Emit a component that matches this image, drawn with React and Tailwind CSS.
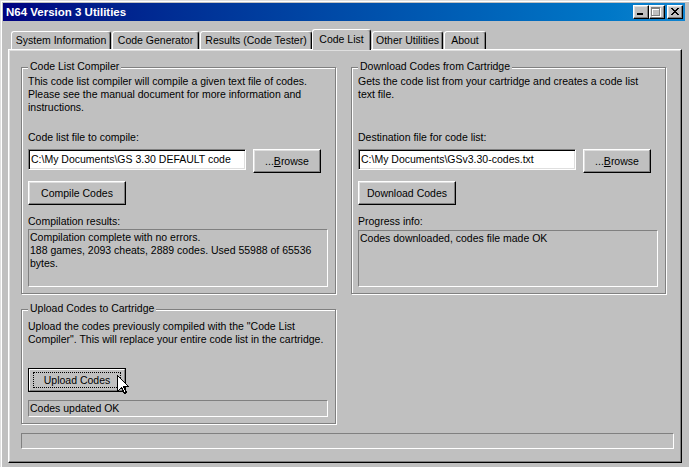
import React from 'react';

const raised =
  'border border-t-white border-l-white border-r-black border-b-black shadow-[inset_-1px_-1px_0_#808080,inset_1px_1px_0_#dfdfdf]';

function Button({ className = '', children }) {
  return (
    <div className={`flex items-center justify-center bg-[#c0c0c0] ${raised} ${className}`}>
      {children}
    </div>
  );
}

function Edit({ value, className = '' }) {
  return (
    <div
      className={`flex h-[21px] w-[218px] items-center overflow-hidden whitespace-nowrap border border-t-[#808080] border-l-[#808080] border-r-white border-b-white bg-white pl-[2px] shadow-[inset_1px_1px_0_#000,inset_-1px_-1px_0_#dfdfdf] ${className}`}
    >
      {value}
    </div>
  );
}

function StaticBox({ className = '', children }) {
  return (
    <div
      className={`w-[300px] overflow-hidden border border-t-[#808080] border-l-[#808080] border-r-white border-b-white pl-[1px] ${className}`}
    >
      {children}
    </div>
  );
}

function Group({ title, className = '', children }) {
  return (
    <div
      className={`flex w-[315px] flex-col items-start border border-[#808080] px-[6px] shadow-[1px_1px_0_#fff,inset_1px_1px_0_#fff] ${className}`}
    >
      <span className="-mt-[8px] bg-[#c0c0c0] px-[2px]">{title}</span>
      {children}
    </div>
  );
}

function Tab({ label, width, gap, selected }) {
  return (
    <div
      style={{ width, marginLeft: gap }}
      className={`flex items-center justify-center rounded-t-[3px] border-t border-l border-r border-t-white border-l-white border-r-black bg-[#c0c0c0] shadow-[inset_-1px_0_0_#808080] ${
        selected ? 'relative z-10 -mb-px h-[21px] pb-[1px]' : 'h-[18px]'
      }`}
    >
      {label}
    </div>
  );
}

function TitleButton({ className = '', children }) {
  return (
    <div className={`h-[14px] w-[16px] bg-[#c0c0c0] ${raised} ${className}`}>
      <svg width="14" height="12" viewBox="0 0 14 12" shapeRendering="crispEdges">
        {children}
      </svg>
    </div>
  );
}

function Cursor() {
  return (
    <svg
      className="absolute left-[88px] top-[6px]"
      width="13"
      height="20"
      viewBox="0 0 13 20"
      shapeRendering="crispEdges"
    >
      <path
        d="M0.5 0.5 L0.5 16.5 L4.5 12.5 L7.5 18.5 L9.5 17.5 L6.5 11.5 L11.5 11.5 Z"
        fill="#fff"
        stroke="#000"
        strokeWidth="1"
      />
    </svg>
  );
}

const tabs = [
  { label: 'System Information', width: 100, gap: 0 },
  { label: 'Code Generator', width: 87, gap: 1 },
  { label: 'Results (Code Tester)', width: 112, gap: 1 },
  { label: 'Code List', width: 59, gap: 0, selected: true },
  { label: 'Other Utilities', width: 71, gap: 1 },
  { label: 'About', width: 42, gap: 1 },
];

export default function App() {
  return (
    <div className="h-[467px] w-[689px] overflow-hidden bg-[#c0c0c0] font-['Liberation_Sans',Arial,sans-serif] text-[10.5px] leading-[13px] text-black">
      <div className="flex h-[474px] w-[692px] flex-col border-t border-l border-[#dfdfdf] p-[2px] shadow-[inset_1px_1px_0_#fff]">
        {/* title bar */}
        <div className="flex h-[18px] w-[682px] items-center bg-linear-to-r from-[#000080] to-[#1084d0] pl-[3px] pr-[2px]">
          <span className="text-[11.5px] font-bold text-white">N64 Version 3 Utilities</span>
          <div className="ml-auto flex">
            <TitleButton>
              <rect x="3" y="7" width="6" height="2" fill="#000" />
            </TitleButton>
            <TitleButton>
              <path d="M2 2h9v2h-9z M2 4h1v7h-1z M10 4h1v7h-1z M2 10h9v1h-9z" fill="#fff" />
              <path d="M1 1h9v2h-9z M1 3h1v7h-1z M9 3h1v7h-1z M1 9h9v1h-9z" fill="#808080" />
            </TitleButton>
            <TitleButton className="ml-[2px]">
              <path
                d="M3 2h2v1h-2z M9 2h2v1h-2z M4 3h2v1h-2z M8 3h2v1h-2z M5 4h4v1h-4z M6 5h2v1h-2z M5 6h4v1h-4z M4 7h2v1h-2z M8 7h2v1h-2z M3 8h2v1h-2z M9 8h2v1h-2z"
                fill="#000"
              />
            </TitleButton>
          </div>
        </div>

        {/* tabs */}
        <div className="mt-[8px] flex h-[20px] items-end pl-[8px]">
          {tabs.map((t) => (
            <Tab key={t.label} {...t} />
          ))}
        </div>

        {/* tab page */}
        <div className="ml-[5px] flex h-[414px] w-[674px] flex-col border border-t-white border-l-white border-r-black border-b-black pl-[12px] pt-[17px] shadow-[inset_-1px_-1px_0_#808080,inset_1px_1px_0_#dfdfdf]">
          <div className="flex gap-[15px]">
            <div className="flex flex-col">
              <Group title="Code List Compiler" className="h-[227px]">
                <p className="mt-[2px] h-[39px]">
                  This code list compiler will compile a given text file of codes.
                  <br />
                  Please see the manual document for more information and
                  <br />
                  instructions.
                </p>
                <span className="mt-[17px]">Code list file to compile:</span>
                <div className="mt-[5px] flex items-start">
                  <Edit value="C:\My Documents\GS 3.30 DEFAULT code" />
                  <Button className="ml-[7px] h-[24px] w-[68px]">
                    <span>
                      ...<u>B</u>rowse
                    </span>
                  </Button>
                </div>
                <Button className="mt-[8px] h-[24px] w-[98px]">Compile Codes</Button>
                <span className="mt-[10px]">Compilation results:</span>
                <StaticBox className="mt-[1px] h-[58px] pt-[1px]">
                  Compilation complete with no errors.
                  <br />
                  188 games, 2093 cheats, 2889 codes. Used 55988 of 65536
                  <br />
                  bytes.
                </StaticBox>
              </Group>

              <Group title="Upload Codes to Cartridge" className="mt-[15px] h-[115px]">
                <p className="mt-[5px]">
                  Upload the codes previously compiled with the "Code List
                  <br />
                  Compiler". This will replace your entire code list in the cartridge.
                </p>
                <div className="relative mt-[22px] h-[24px] w-[98px] border border-black">
                  <div className="flex h-full w-full items-center justify-center border border-t-white border-l-white border-r-[#808080] border-b-[#808080]">
                    <div className="flex h-[16px] w-[88px] items-center justify-center border border-dotted border-black">
                      Upload Codes
                    </div>
                  </div>
                  <Cursor />
                </div>
                <StaticBox className="mt-[8px] flex h-[17px] items-center">Codes updated OK</StaticBox>
              </Group>
            </div>

            <Group title="Download Codes from Cartridge" className="h-[227px]">
              <p className="mt-[2px] h-[39px]">
                Gets the code list from your cartridge and creates a code list
                <br />
                text file.
              </p>
              <span className="mt-[17px]">Destination file for code list:</span>
              <div className="mt-[5px] flex items-start">
                <Edit value="C:\My Documents\GSv3.30-codes.txt" />
                <Button className="ml-[7px] h-[24px] w-[68px]">
                  <span>
                    ...<u>B</u>rowse
                  </span>
                </Button>
              </div>
              <Button className="mt-[8px] h-[24px] w-[98px]">Download Codes</Button>
              <span className="mt-[10px]">Progress info:</span>
              <StaticBox className="mt-[2px] h-[57px] pt-[1px]">Codes downloaded, codes file made OK</StaticBox>
            </Group>
          </div>

          {/* status field */}
          <div className="mt-[9px] h-[16px] w-[653px] border border-t-[#808080] border-l-[#808080] border-r-white border-b-white" />
        </div>
      </div>
    </div>
  );
}
